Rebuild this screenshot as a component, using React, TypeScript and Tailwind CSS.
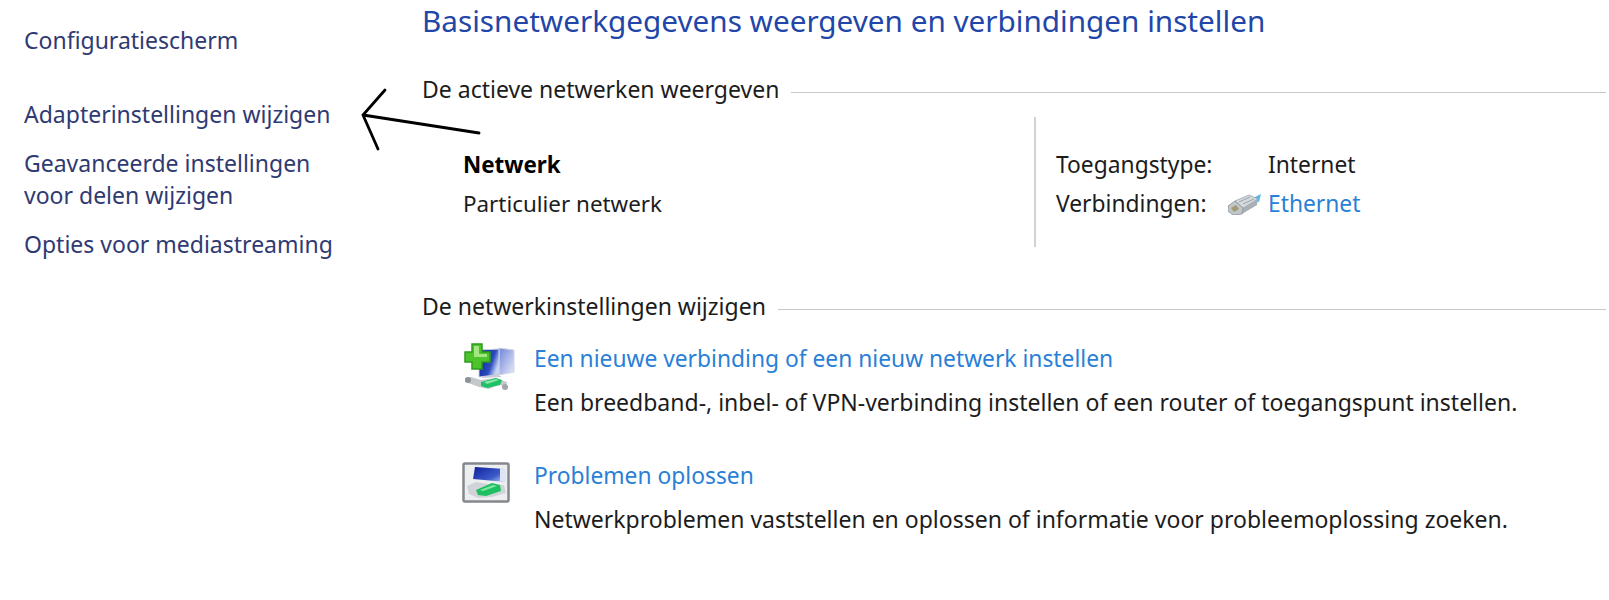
import React from "react";

const NewConnectionIcon = () => (
  <svg width="56" height="52" viewBox="0 0 56 52" className="blur-[0.7px]">
    <defs>
      <linearGradient id="scr1" x1="0" y1="0" x2="1" y2="0.5">
        <stop offset="0" stopColor="#0c1c98" />
        <stop offset="0.7" stopColor="#2c4cc0" />
        <stop offset="1" stopColor="#c8d4f4" />
      </linearGradient>
      <linearGradient id="scr1b" x1="0" y1="0" x2="1" y2="1">
        <stop offset="0" stopColor="#6f84d8" />
        <stop offset="1" stopColor="#e8ecfa" />
      </linearGradient>
    </defs>
    <path d="M37 5l15 2v22l-15 3z" fill="url(#scr1b)" stroke="#cfd6e6" strokeWidth="1" />
    <path d="M17 7l20-1v26l-20 2z" fill="url(#scr1)" stroke="#c9d0e0" strokeWidth="1" />
    <path d="M20 33l16-1 4 2-20 1z" fill="#c8ccd4" />
    <path d="M10 1h10v8h8v10h-8v7H10v-7H3V9h7z" fill="#4cc42a" stroke="#2f9a1e" strokeWidth="1.5" />
    <path d="M12 3h5v8h8v3H12z" fill="#a4e684" />
    <path d="M3 35l6-1 10 3 14-2 12 4-1 4-8-1-9 4-10-2-8-3-6-2z" fill="#c4c8cc" />
    <path d="M19 39l15-4 6 2-2 5-13 3-6-2z" fill="#1fc066" />
    <path d="M22 39l12-3 3 1-12 4z" fill="#86e6a8" />
    <circle cx="6" cy="37" r="3" fill="#8d9298" />
    <circle cx="43" cy="44" r="3" fill="#a2a6ac" />
  </svg>
);

const TroubleshootIcon = () => (
  <svg width="48" height="42" viewBox="0 0 48 42" className="mt-[2px] blur-[0.7px]">
    <defs>
      <linearGradient id="scr2" x1="0" y1="0" x2="1" y2="0.8">
        <stop offset="0" stopColor="#0f1f9c" />
        <stop offset="0.7" stopColor="#3d5cc8" />
        <stop offset="1" stopColor="#a6b8ec" />
      </linearGradient>
    </defs>
    <rect x="1.5" y="1.5" width="45" height="38" rx="1.5" fill="#eceef0" stroke="#84888c" strokeWidth="2.5" />
    <path d="M13 5l30 2 1 13-33-3z" fill="url(#scr2)" />
    <path d="M38 6l6 1v13l-6-1z" fill="#dfe5f7" />
    <path d="M5 24l9-4 12 2 16 1 2 8-14 4-14 1-9-4z" fill="#d0d4d8" />
    <path d="M14 28l16-7 8 2 1 6-15 5-8-1z" fill="#1dbf62" />
    <path d="M18 28l13-5 4 1-14 5z" fill="#84e6a6" />
  </svg>
);

const EthernetIcon = () => (
  <svg width="34" height="21" viewBox="0 0 34 21" className="blur-[0.5px]">
    <path d="M25 4l8-4-2 8-4-1z" fill="#58b8e8" />
    <path d="M7 7L21 1l9 4-15 9z" fill="#d4dade" stroke="#9aa2a8" strokeWidth="0.8" />
    <path d="M11 8l11-5M15 10l11-5" stroke="#9aa2a8" strokeWidth="1" />
    <path d="M15 14l15-9-1 6-15 9z" fill="#a8b0b6" />
    <path d="M0 12l7-5 8 7-1 6-9 1-5-4z" fill="#c0c6ca" stroke="#868e94" strokeWidth="0.8" />
    <path d="M3 14l5-3 3 4-5 3z" fill="#a09a70" />
  </svg>
);

const SectionTitle = ({ title }: { title: string }) => (
  <div className="flex items-center gap-3">
    <h2 className="whitespace-nowrap text-[23px] leading-8 text-[#1c1c1c]">{title}</h2>
    <div className="mt-[6px] h-px flex-1 bg-[#c4c8cc]" />
  </div>
);

const Task = ({
  icon,
  title,
  description,
}: {
  icon: React.ReactNode;
  title: string;
  description: string;
}) => (
  <div className="flex">
    <div className="w-[72px] shrink-0">{icon}</div>
    <div>
      <a className="block text-[22.8px] leading-8 text-[#2a7fd6]">{title}</a>
      <p className="mt-[11px] whitespace-nowrap text-[23px] leading-8 text-[#1c1c1c]">{description}</p>
    </div>
  </div>
);

export default function App() {
  return (
    <div
      className="relative flex h-[600px] w-[1609px] overflow-hidden bg-white"
      style={{ fontFamily: '"Noto Sans", sans-serif' }}
    >
      <aside className="w-[422px] shrink-0 pl-6 pt-6 text-[23px] leading-8 text-[#2f3a72]">
        <a className="block">Configuratiescherm</a>
        <a className="mt-[42px] block">Adapterinstellingen wijzigen</a>
        <a className="mt-[17px] block">
          Geavanceerde instellingen
          <br />
          voor delen wijzigen
        </a>
        <a className="mt-[17px] block">Opties voor mediastreaming</a>
      </aside>

      <main className="min-w-0 flex-1 pr-[3px]">
        <h1 className="whitespace-nowrap pt-[1px] text-[29.7px] leading-10 text-[#1f46a8]">
          Basisnetwerkgegevens weergeven en verbindingen instellen
        </h1>

        <div className="mt-[32px]">
          <SectionTitle title="De actieve netwerken weergeven" />
        </div>

        <div className="mt-[12px] flex h-[130px] leading-8 text-[#1c1c1c]">
          <div className="w-[612px] pl-[41px] pt-[32px] text-[22.4px]">
            <p className="font-bold text-black">Netwerk</p>
            <p className="mt-[7px]">Particulier netwerk</p>
          </div>
          <div className="w-[2px] bg-[#d0d2d4]" />
          <div className="pl-[20px] pt-[32px] text-[22.8px]">
            <div className="flex">
              <span className="w-[212px]">Toegangstype:</span>
              <span>Internet</span>
            </div>
            <div className="mt-[7px] flex">
              <span className="w-[172px]">Verbindingen:</span>
              <span className="flex w-[40px] items-center">
                <EthernetIcon />
              </span>
              <a className="text-[#2a7fd6]">Ethernet</a>
            </div>
          </div>
        </div>

        <div className="mt-[43px]">
          <SectionTitle title="De netwerkinstellingen wijzigen" />
        </div>

        <div className="mt-[21px] pl-[40px]">
          <Task
            icon={<NewConnectionIcon />}
            title="Een nieuwe verbinding of een nieuw netwerk instellen"
            description="Een breedband-, inbel- of VPN-verbinding instellen of een router of toegangspunt instellen."
          />
        </div>
        <div className="mt-[42px] pl-[40px]">
          <Task
            icon={<TroubleshootIcon />}
            title="Problemen oplossen"
            description="Netwerkproblemen vaststellen en oplossen of informatie voor probleemoplossing zoeken."
          />
        </div>
      </main>

      {/* hand drawn arrow on top of the screenshot */}
      <svg className="pointer-events-none absolute left-[355px] top-[82px]" width="135" height="75" viewBox="355 82 135 75">
        <path
          d="M479 133L363 115M385 90L363 115L378 149"
          fill="none"
          stroke="#000"
          strokeWidth="2.8"
          strokeLinecap="round"
        />
      </svg>
    </div>
  );
}
